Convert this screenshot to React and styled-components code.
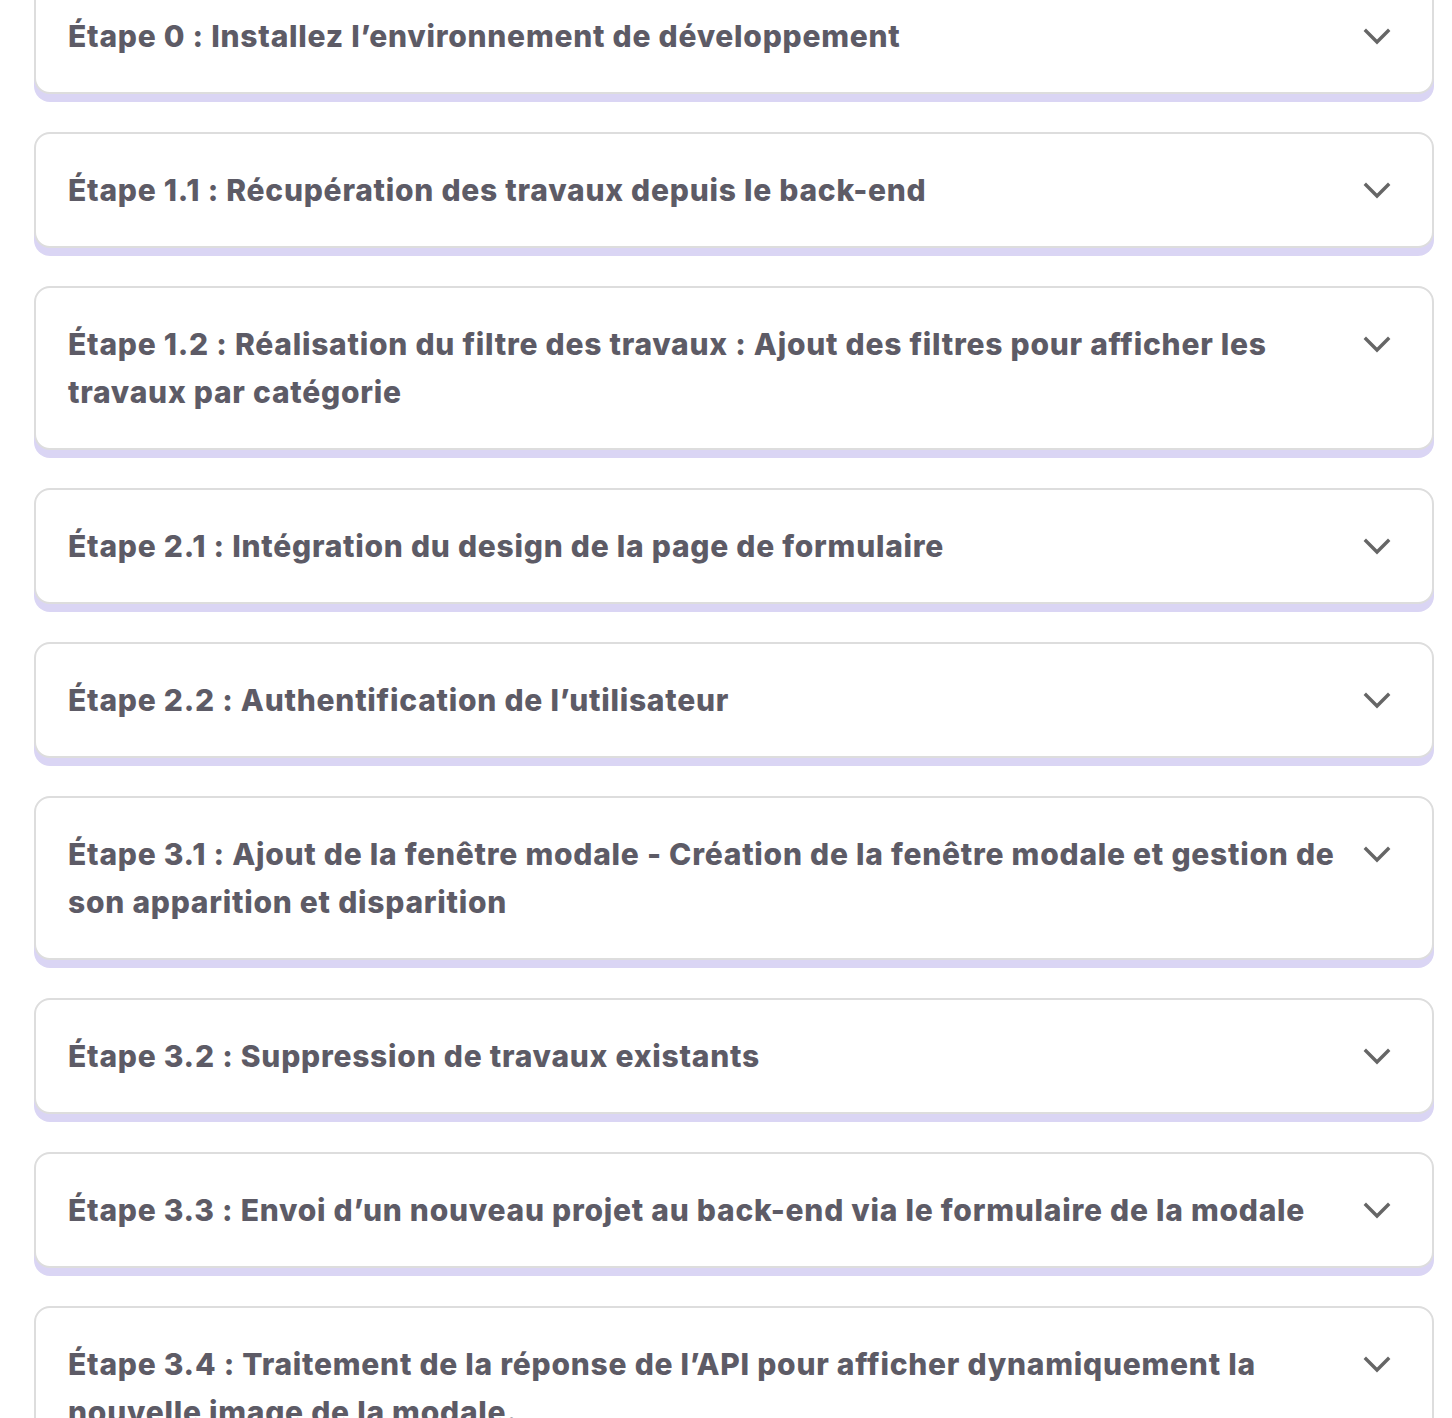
import React from "react";
import styled, { createGlobalStyle } from "styled-components";

const Global = createGlobalStyle`
  html, body { margin: 0; padding: 0; background: #ffffff; }
  body { font-family: Inter, "Noto Sans", sans-serif; overflow: hidden; }
`;

const List = styled.div`
  display: flex;
  flex-direction: column;
  gap: 38px;
  width: 1400px;
  margin: -22px 0 0 34px;
`;

const Card = styled.div`
  box-sizing: border-box;
  background: #ffffff;
  border: 2px solid #dddddd;
  border-radius: 16px;
  box-shadow: 0 8px 0 0 #dad5f4;
  padding: 32px 31px 32px 32px;
  display: flex;
  align-items: flex-start;
  gap: 8px;
`;

const Title = styled.h3`
  flex: 1;
  margin: 0;
  font-family: Inter, "Noto Sans", sans-serif;
  font-weight: 800;
  font-size: 30px;
  line-height: 48px;
  color: #5d5b66;
  letter-spacing: 0.75px;
`;

const Chevron = styled.span`
  flex: 0 0 48px;
  height: 48px;
  display: flex;
  align-items: center;
  justify-content: center;
  color: #666666;
`;

const steps = [
  "Étape 0 : Installez l’environnement de développement",
  "Étape 1.1 : Récupération des travaux depuis le back-end",
  "Étape 1.2 : Réalisation du filtre des travaux : Ajout des filtres pour afficher les travaux par catégorie",
  "Étape 2.1 : Intégration du design de la page de formulaire",
  "Étape 2.2 : Authentification de l’utilisateur",
  "Étape 3.1 : Ajout de la fenêtre modale - Création de la fenêtre modale et gestion de son apparition et disparition",
  "Étape 3.2 : Suppression de travaux existants",
  "Étape 3.3 : Envoi d’un nouveau projet au back-end via le formulaire de la modale",
  "Étape 3.4 : Traitement de la réponse de l’API pour afficher dynamiquement la nouvelle image de la modale.",
];

function ChevronDown() {
  return (
    <svg width="48" height="48" viewBox="0 0 24 24" fill="none" stroke="currentColor" strokeWidth="1.7" strokeLinecap="square" strokeLinejoin="miter">
      <path d="m6.5 9.5 5.5 5.5 5.5-5.5" />
    </svg>
  );
}

export default function App() {
  return (
    <>
      <Global />
      <List>
        {steps.map((s) => (
          <Card key={s}>
            <Title>{s}</Title>
            <Chevron>
              <ChevronDown />
            </Chevron>
          </Card>
        ))}
      </List>
    </>
  );
}
